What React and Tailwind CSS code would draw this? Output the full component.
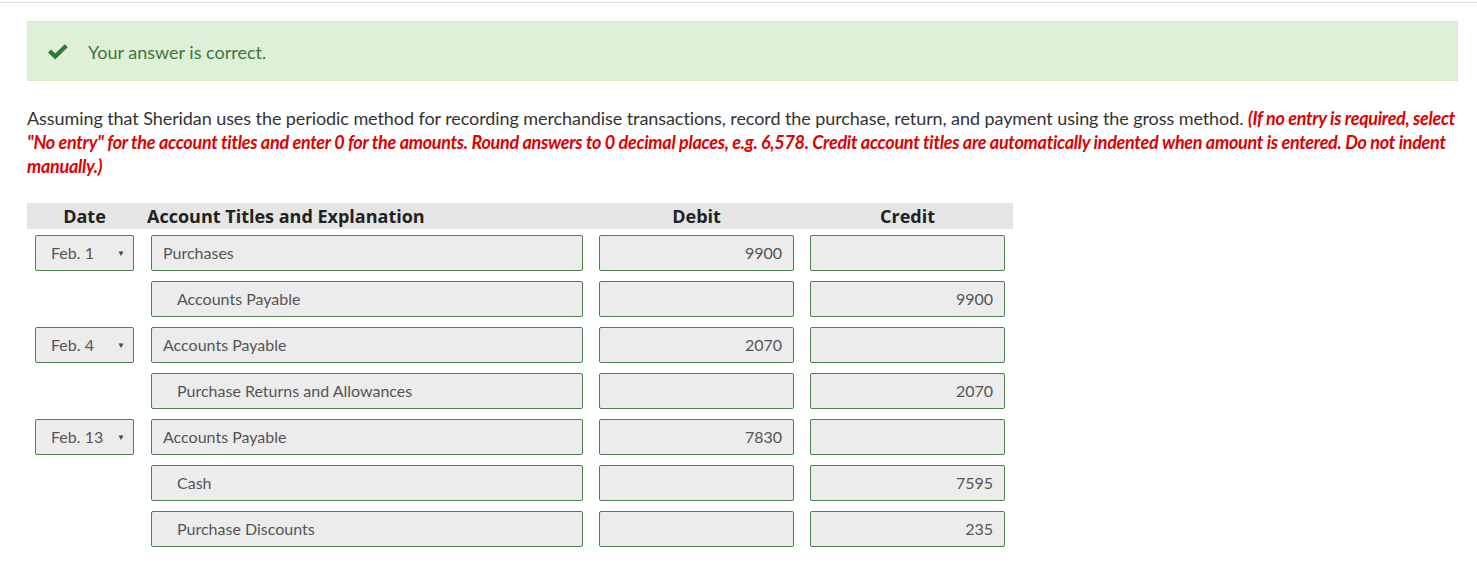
import React from 'react';

const rows = [
  { date: 'Feb. 1', account: 'Purchases', debit: '9900', credit: '' },
  { date: '', account: 'Accounts Payable', debit: '', credit: '9900' },
  { date: 'Feb. 4', account: 'Accounts Payable', debit: '2070', credit: '' },
  { date: '', account: 'Purchase Returns and Allowances', debit: '', credit: '2070' },
  { date: 'Feb. 13', account: 'Accounts Payable', debit: '7830', credit: '' },
  { date: '', account: 'Cash', debit: '', credit: '7595' },
  { date: '', account: 'Purchase Discounts', debit: '', credit: '235' },
];

const box = 'shrink-0 h-[36px] bg-[#ececec] border border-[#4b7f4b] rounded-[2px] flex items-center text-[16px] text-[#555]';

function CheckIcon() {
  return (
    <svg width="22" height="16" viewBox="0 0 22 16" className="shrink-0">
      <path d="M1 8.5 L4 5.5 L8.2 9.6 L17.8 0.2 L20.8 3.2 L8.2 15.6 Z" fill="#2f7a35" />
    </svg>
  );
}

export default function App() {
  return (
    <div className="min-h-[584px] bg-white font-['Lato',sans-serif]">
      <div className="h-[3px] border-b border-[#ddd]" />
      <div className="px-[27px] pt-[18px] pr-[19px]">
        <div className="h-[60px] bg-[#dff0d8] border border-[#d6e9c6] flex items-center pl-[19px] gap-[19px] pt-[2px]">
          <CheckIcon />
          <span className="text-[18px] text-[#3c763d]">Your answer is correct.</span>
        </div>

        <p className="mt-[25px] text-[18px] leading-[24px] text-[#333] tracking-[-0.08px]">
          Assuming that Sheridan uses the periodic method for recording merchandise transactions, record the purchase, return, and payment using the gross method.{' '}
          <span className="text-[#e00000] font-bold italic tracking-[-0.3px]">
            (If no entry is required, select "No entry" for the account titles and enter 0 for the amounts. Round answers to 0 decimal places, e.g. 6,578. Credit account titles are automatically indented when amount is entered. Do not indent manually.)
          </span>
        </p>

        <div className="mt-[25px] w-[986px]">
          <div className="h-[26px] bg-[#e5e5e5] flex items-center px-[8px] font-['Open_Sans',sans-serif] font-bold text-[18px] text-[#222]">
            <div className="w-[99px] mr-[17px] shrink-0 text-center">Date</div>
            <div className="w-[432px] -ml-[4px] mr-[20px] shrink-0">Account Titles and Explanation</div>
            <div className="w-[195px] mr-[16px] shrink-0 text-center">Debit</div>
            <div className="w-[195px] shrink-0 text-center">Credit</div>
          </div>
          <div className="flex flex-col gap-[10px] pt-[6px] px-[8px]">
            {rows.map((r, i) => (
              <div key={i} className="flex">
                <div className="w-[99px] mr-[17px] shrink-0">
                  {r.date && (
                    <div className={box + ' w-[99px] justify-between pl-[15px] pr-[8px]'}>
                      <span>{r.date}</span>
                      <span className="text-[8px] text-[#444]">▼</span>
                    </div>
                  )}
                </div>
                <div className={box + ' w-[432px] mr-[16px] ' + (r.credit ? 'pl-[25px]' : 'pl-[11px]')}>{r.account}</div>
                <div className={box + ' w-[195px] mr-[16px] justify-end pr-[11px]'}>{r.debit}</div>
                <div className={box + ' w-[195px] justify-end pr-[11px]'}>{r.credit}</div>
              </div>
            ))}
          </div>
        </div>
      </div>
    </div>
  );
}
